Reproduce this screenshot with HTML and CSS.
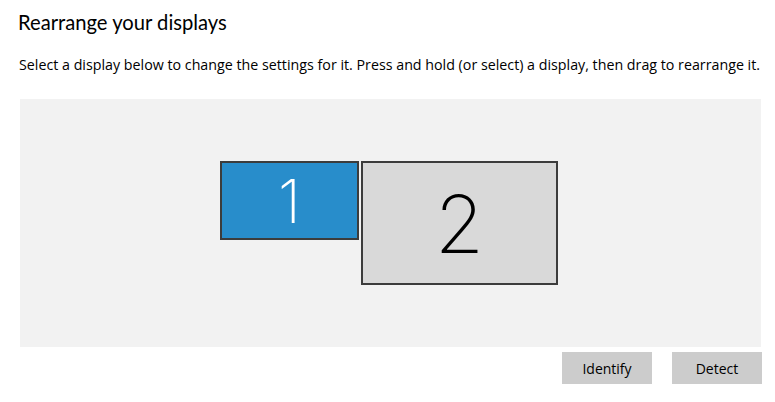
FILE: index.html
```html
<!DOCTYPE html>
<html lang="en">
<head>
    <meta charset="UTF-8">
    <meta name="viewport" content="width=device-width, initial-scale=1.0">
    <title>Rearrange your displays</title>
    <link rel="stylesheet" href="styles.css">
</head>
<body>

    <div class="page">
        <h2 class="title">Rearrange your displays</h2>
        <p class="hint">Select a display below to change the settings for it. Press and hold (or select) a display, then drag to rearrange it.</p>

        <div class="arrange">
            <div class="display display-1 selected">1</div>
            <div class="display display-2">2</div>
        </div>

        <div class="actions">
            <button class="btn">Identify</button>
            <button class="btn">Detect</button>
        </div>
    </div>

</body>
</html>
```

FILE: styles.css
```css
body {
    margin: 0;
    background: #fff;
    font-family: "Open Sans", "Noto Sans", sans-serif;
    color: #000;
}
.page {
    padding: 8px 13px 0 18px;
}
.title {
    margin: 0;
    font-family: Lato, "Open Sans", sans-serif;
    font-size: 20.2px;
    font-weight: 400;
    line-height: 28px;
}
.hint {
    margin: 19px 0 0 1px;
    font-size: 14.25px;
    line-height: 20px;
    white-space: nowrap;
}
.arrange {
    position: relative;
    margin: 24px 0 0 2px;
    width: 741px;
    height: 248px;
    background-color: #f2f2f2;
}
.display {
    position: absolute;
    top: 62px;
    box-sizing: border-box;
    border: 2px solid #3c3c3c;
    display: flex;
    align-items: center;
    justify-content: center;
    font-family: Inter, "Open Sans", sans-serif;
    font-weight: 200;
}
.display-1 {
    left: 200px;
    width: 139px;
    height: 79px;
    background-color: #288dcb;
    color: #fff;
    font-size: 60px;
}
.display-2 {
    left: 341px;
    width: 197px;
    height: 124px;
    background-color: #d9d9d9;
    color: #000;
    font-size: 80px;
}
.actions {
    display: flex;
    justify-content: flex-end;
    gap: 20px;
    width: 744px;
    margin-top: 5px;
}
.btn {
    width: 90px;
    height: 32px;
    border: none;
    background-color: #cccccc;
    font-family: "Open Sans", "Noto Sans", sans-serif;
    font-size: 14px;
    color: #000;
    padding: 0;
}
```
